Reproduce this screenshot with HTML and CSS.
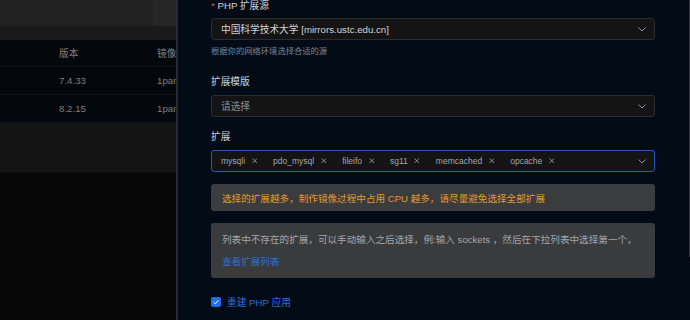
FILE: index.html
```html
<!DOCTYPE html>
<html lang="zh">
<head>
<meta charset="utf-8">
<link rel="stylesheet" href="styles.css">
</head>
<body>
<div class="page">
  <div class="backdrop">
    <div class="bd-head"><div class="bd-head-l"></div><div class="bd-head-r"></div></div>
    <div class="bd-strip"></div>
    <div class="bd-table">
      <div class="bd-row bd-th"><span class="c1">版本</span><span class="c2">镜像</span></div>
      <div class="bd-row"><span class="c1">7.4.33</span><span class="c2">1panel</span></div>
      <div class="bd-row"><span class="c1">8.2.15</span><span class="c2">1panel</span></div>
    </div>
    <div class="bd-foot"></div>
    <div class="bd-rest"></div>
  </div>
  <div class="drawer">
    <div class="form">
      <div class="label first"><span class="req">*</span> PHP 扩展源</div>
      <div class="select">
        <span class="value">中国科学技术大学 [mirrors.ustc.edu.cn]</span>
        <svg class="chev" viewBox="0 0 8 5" width="8" height="5"><path d="M0.5 0.5 L4 4 L7.5 0.5" fill="none" stroke="#8d9095" stroke-width="1"/></svg>
      </div>
      <div class="help">根据你的网络环境选择合适的源</div>

      <div class="label l2">扩展模版</div>
      <div class="select">
        <span class="placeholder">请选择</span>
        <svg class="chev" viewBox="0 0 8 5" width="8" height="5"><path d="M0.5 0.5 L4 4 L7.5 0.5" fill="none" stroke="#8d9095" stroke-width="1"/></svg>
      </div>

      <div class="label l3">扩展</div>
      <div class="select focus">
        <div class="tags">
          <span class="tag">mysqli<svg class="x" viewBox="0 0 6 6" width="6" height="6"><path d="M0.6 0.6 L5.4 5.4 M5.4 0.6 L0.6 5.4" stroke="#a3a6ad" stroke-width="0.9"/></svg></span>
          <span class="tag">pdo_mysql<svg class="x" viewBox="0 0 6 6" width="6" height="6"><path d="M0.6 0.6 L5.4 5.4 M5.4 0.6 L0.6 5.4" stroke="#a3a6ad" stroke-width="0.9"/></svg></span>
          <span class="tag">fileifo<svg class="x" viewBox="0 0 6 6" width="6" height="6"><path d="M0.6 0.6 L5.4 5.4 M5.4 0.6 L0.6 5.4" stroke="#a3a6ad" stroke-width="0.9"/></svg></span>
          <span class="tag">sg11<svg class="x" viewBox="0 0 6 6" width="6" height="6"><path d="M0.6 0.6 L5.4 5.4 M5.4 0.6 L0.6 5.4" stroke="#a3a6ad" stroke-width="0.9"/></svg></span>
          <span class="tag">memcached<svg class="x" viewBox="0 0 6 6" width="6" height="6"><path d="M0.6 0.6 L5.4 5.4 M5.4 0.6 L0.6 5.4" stroke="#a3a6ad" stroke-width="0.9"/></svg></span>
          <span class="tag">opcache<svg class="x" viewBox="0 0 6 6" width="6" height="6"><path d="M0.6 0.6 L5.4 5.4 M5.4 0.6 L0.6 5.4" stroke="#a3a6ad" stroke-width="0.9"/></svg></span>
        </div>
        <svg class="chev" viewBox="0 0 8 5" width="8" height="5"><path d="M0.5 0.5 L4 4 L7.5 0.5" fill="none" stroke="#8d9095" stroke-width="1"/></svg>
      </div>

      <div class="warn">选择的扩展越多，制作镜像过程中占用 CPU 越多，请尽量避免选择全部扩展</div>

      <div class="info">
        <div class="info-text">列表中不存在的扩展，可以手动输入之后选择，例:输入 sockets ，然后在下拉列表中选择第一个，</div>
        <div class="info-link">查看扩展列表</div>
      </div>

      <div class="check">
        <span class="box"><svg viewBox="0 0 10 10" width="10" height="10"><path d="M2.6 5.2 L4.3 6.8 L7.4 3.4" fill="none" stroke="#ffffff" stroke-width="1"/></svg></span>
        <span class="check-label">重建 PHP 应用</span>
      </div>
    </div>
    <div class="scroll-thumb"></div>
  </div>
</div>
</body>
</html>
```
FILE: styles.css
```css
* { box-sizing: border-box; }
html, body { margin: 0; padding: 0; }
body {
  width: 690px;
  height: 320px;
  overflow: hidden;
  background: #020b16;
  font-family: "Liberation Sans", "Noto Sans CJK SC", sans-serif;
}
.page {
  display: flex;
  width: 690px;
  height: 320px;
}
.backdrop {
  width: 178px;
  flex: none;
  display: flex;
  flex-direction: column;
  border-right: 2px solid #2a2b2d;
  background: #070707;
  overflow: hidden;
}
.bd-head { height: 26px; display: flex; flex: none; }
.bd-head-l { width: 153px; background: #222222; }
.bd-head-r { flex: 1; background: #262626; }
.bd-strip { height: 14px; background: #1a1a1a; flex: none; }
.bd-table { background: #04070b; flex: none; }
.bd-row {
  height: 28px;
  display: flex;
  align-items: center;
  border-bottom: 1px solid #101419;
  font-size: 9.7px;
  color: #7c7f84;
  white-space: nowrap;
}
.bd-th { height: 27px; }
.c1 { margin-left: 59px; width: 98px; flex: none; }
.c2 { flex: none; }
.bd-foot { height: 50px; background: #141414; border-bottom: 1px solid #0e0e0e; flex: none; }
.bd-rest { flex: 1; background: #070707; }

.drawer {
  flex: 1;
  position: relative;
  background: #020b16;
  padding-left: 33px;
}
.form { width: 444px; }
.label {
  font-size: 9.7px;
  line-height: 11px;
  height: 11px;
  color: #cfd3dc;
  margin-bottom: 7px;
}
.label.first { margin-top: 0; }
.label.l2 { margin-top: 19px; margin-bottom: 8px; }
.label.l3 { margin-top: 14px; margin-bottom: 8px; }
.req { color: #e8574f; }
.select {
  height: 22px;
  display: flex;
  align-items: center;
  justify-content: space-between;
  border: 1px solid #2a2c30;
  border-radius: 3px;
  background: #141414;
  padding: 0 8px 0 9px;
  font-size: 9.7px;
}
.select.focus { border-color: #1d5ac2; }
.value { color: #cfd3dc; }
.placeholder { color: #8d9095; }
.chev { flex: none; }
.help {
  margin-top: 6px;
  font-size: 8.3px;
  line-height: 11px;
  color: #7f8794;
}
.tags { display: flex; align-items: center; }
.tag {
  display: inline-flex;
  align-items: center;
  font-size: 8.5px;
  color: #a3a6ad;
  margin-right: 16px;
}
.x { margin-left: 6.5px; width: 5.5px; height: 5.5px; }
.warn {
  margin-top: 12px;
  height: 27px;
  background: #3a3c3e;
  border-radius: 3px;
  display: flex;
  align-items: center;
  padding-left: 11px;
  font-size: 9.6px;
  color: #e19a2c;
}
.info {
  margin-top: 12px;
  height: 55px;
  background: #393b3d;
  border-radius: 3px;
  padding: 11px 11px 0 11px;
  font-size: 9.6px;
  color: #a3a6ad;
}
.info-text { line-height: 12px; white-space: nowrap; }
.info-link { margin-top: 10px; line-height: 12px; color: #2f6fd0; }
.check {
  margin-top: 18px;
  display: flex;
  align-items: center;
  height: 12px;
}
.box {
  width: 10px;
  height: 10px;
  background: #1f6fe0;
  border-radius: 2px;
  display: inline-flex;
}
.check-label {
  margin-left: 6px;
  font-size: 9.7px;
  color: #2f6fd8;
}
.scroll-thumb {
  position: absolute;
  right: 0;
  top: 0;
  width: 1px;
  height: 257px;
  background: #30353c;
}
```
